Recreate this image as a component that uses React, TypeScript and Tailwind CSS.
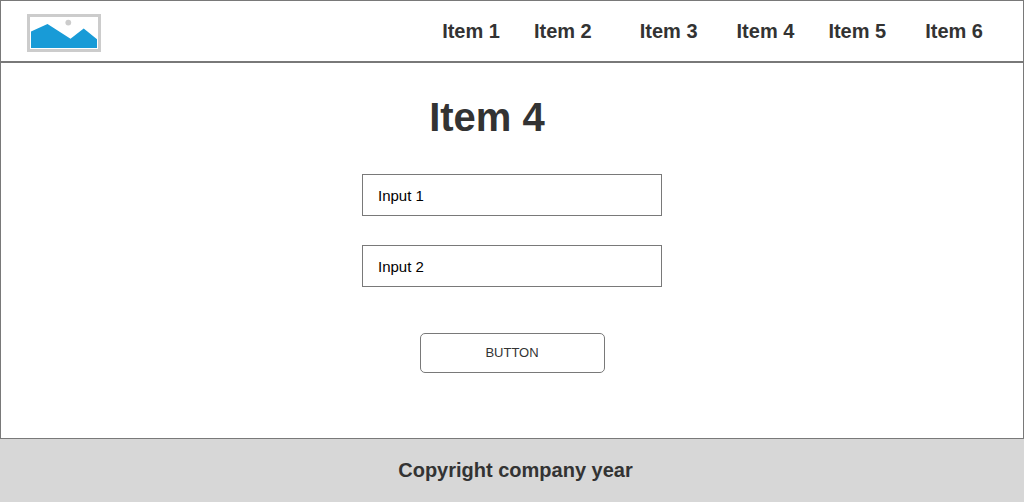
const navItems = [
  { label: "Item 1", spacing: "" },
  { label: "Item 2", spacing: "ml-[34px]" },
  { label: "Item 3", spacing: "ml-12" },
  { label: "Item 4", spacing: "ml-[39px]" },
  { label: "Item 5", spacing: "ml-[34px]" },
  { label: "Item 6", spacing: "ml-[39px]" },
];

function Logo() {
  return (
    <svg width="74" height="38" viewBox="0 0 74 38" role="img" aria-label="Logo">
      <rect x="1.5" y="1.5" width="71" height="35" fill="#fff" stroke="#ccc" strokeWidth="3" />
      <circle cx="41.3" cy="8.6" r="2.9" fill="#ccc" />
      <path d="M4 17.4 20.5 10 43.5 24.8 56.7 14.5 70 25.2V34H4Z" fill="#189bd7" />
    </svg>
  );
}

function Field({ id, text }: { id: string; text: string }) {
  return (
    <input
      id={id}
      type="text"
      aria-label={text}
      defaultValue={text}
      className="h-[42px] w-full border border-[#797979] bg-white px-[15px] text-[15px] text-black outline-none"
    />
  );
}

export default function App() {
  return (
    <div className="flex min-h-screen flex-col bg-white font-['Liberation_Sans',Arial,sans-serif] text-[#333]">
      <header className="flex items-start justify-between border border-b-2 border-[#797979] pt-[13px] pr-10 pb-[9px] pl-[26px]">
        <a href="#home" className="flex">
          <Logo />
        </a>
        <nav className="flex text-[20px] leading-[34px] font-bold">
          {navItems.map((item) => (
            <a key={item.label} href="#" className={item.spacing}>
              {item.label}
            </a>
          ))}
        </nav>
      </header>

      <main className="flex grow flex-col items-center border-x border-b border-[#797979] pt-8">
        <h1 className="pr-[50px] text-[40px] leading-[44px] font-bold">Item 4</h1>
        <form className="mt-[35px] flex w-[300px] flex-col items-center" onSubmit={(e) => e.preventDefault()}>
          <div className="flex w-full flex-col gap-[29px]">
            <Field id="input-1" text="Input 1" />
            <Field id="input-2" text="Input 2" />
          </div>
          <button
            type="submit"
            className="mt-[46px] h-10 w-[185px] rounded-[5px] border border-[#797979] bg-white text-[13px]"
          >
            BUTTON
          </button>
        </form>
      </main>

      <footer className="bg-[#d7d7d7] py-[18px] pl-[7px] text-center text-[20px] leading-[27px] font-bold">
        Copyright company year
      </footer>
    </div>
  );
}
